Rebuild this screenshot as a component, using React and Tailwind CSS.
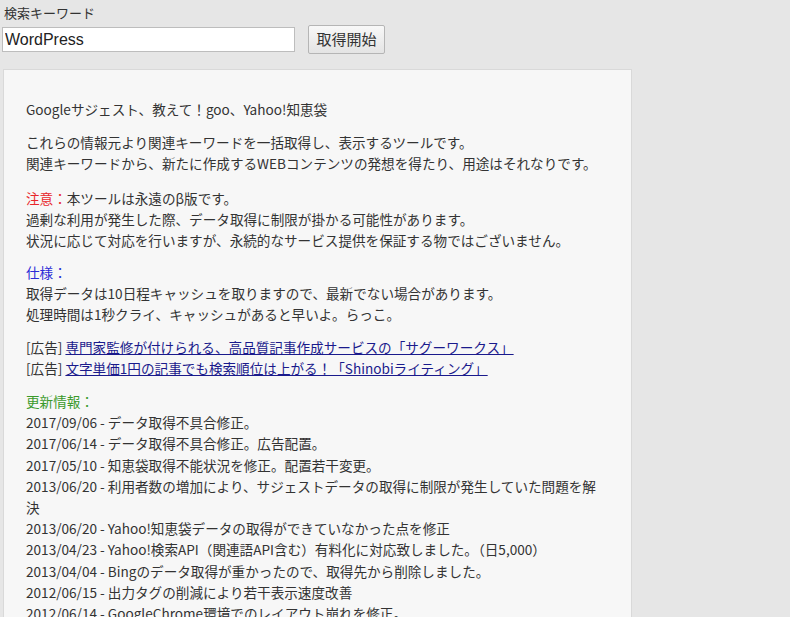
import React from "react";

const updates = [
  "2017/09/06 - データ取得不具合修正。",
  "2017/06/14 - データ取得不具合修正。広告配置。",
  "2017/05/10 - 知恵袋取得不能状況を修正。配置若干変更。",
  "2013/06/20 - 利用者数の増加により、サジェストデータの取得に制限が発生していた問題を解決",
  "2013/06/20 - Yahoo!知恵袋データの取得ができていなかった点を修正",
  "2013/04/23 - Yahoo!検索API（関連語API含む）有料化に対応致しました。（日5,000）",
  "2013/04/04 - Bingのデータ取得が重かったので、取得先から削除しました。",
  "2012/06/15 - 出力タグの削減により若干表示速度改善",
  "2012/06/14 - GoogleChrome環境でのレイアウト崩れを修正。",
];

export default function App() {
  return (
    <div
      className="min-h-screen bg-[#e6e6e6] px-[2px] pt-[4px] text-[#333]"
      style={{ fontFamily: '"Noto Sans CJK JP", "Noto Sans", sans-serif' }}
    >
      <div className="text-[13px] leading-[18px] pl-[2px]">検索キーワード</div>
      <div className="mt-[3px] flex items-center gap-[13px]">
        <input
          defaultValue="WordPress"
          className="h-[25px] w-[293px] border border-[#bdbdbd] bg-white px-[2px] font-['Liberation_Sans',Arial,sans-serif] text-[16px] text-[#222] outline-none"
        />
        <button className="h-[29px] w-[77px] rounded-[2px] border border-[#b5b5b5] bg-gradient-to-b from-[#f8f8f8] to-[#e4e4e4] text-[15px] text-[#333]">
          取得開始
        </button>
      </div>

      <div className="mt-[15px] ml-[1px] w-[629px] border border-[#d9d9d9] bg-[#f7f7f7] px-[22px] pt-[29px] pb-[20px] text-[13.6px] leading-[21px]">
        <p>Googleサジェスト、教えて！goo、Yahoo!知恵袋</p>

        <p className="mt-[12px]">
          これらの情報元より関連キーワードを一括取得し、表示するツールです。
          <br />
          関連キーワードから、新たに作成するWEBコンテンツの発想を得たり、用途はそれなりです。
        </p>

        <p className="mt-[14px]">
          <span className="text-[#e8262b]">注意：</span>本ツールは永遠のβ版です。
          <br />
          過剰な利用が発生した際、データ取得に制限が掛かる可能性があります。
          <br />
          状況に応じて対応を行いますが、永続的なサービス提供を保証する物ではございません。
        </p>

        <p className="mt-[11px]">
          <span className="text-[#2b2bd6]">仕様：</span>
          <br />
          取得データは10日程キャッシュを取りますので、最新でない場合があります。
          <br />
          処理時間は1秒クライ、キャッシュがあると早いよ。らっこ。
        </p>

        <p className="mt-[12px]">
          [広告]{" "}
          <a href="#" className="text-[#1a1a8c] underline">
            専門家監修が付けられる、高品質記事作成サービスの「サグーワークス」
          </a>
          <br />
          [広告]{" "}
          <a href="#" className="text-[#1a1a8c] underline">
            文字単価1円の記事でも検索順位は上がる！「Shinobiライティング」
          </a>
        </p>

        <div className="mt-[12px] leading-[21.2px]">
          <div className="text-[#3a9a2a]">更新情報：</div>
          {updates.map((u) => (
            <div key={u}>{u}</div>
          ))}
        </div>
      </div>
    </div>
  );
}
